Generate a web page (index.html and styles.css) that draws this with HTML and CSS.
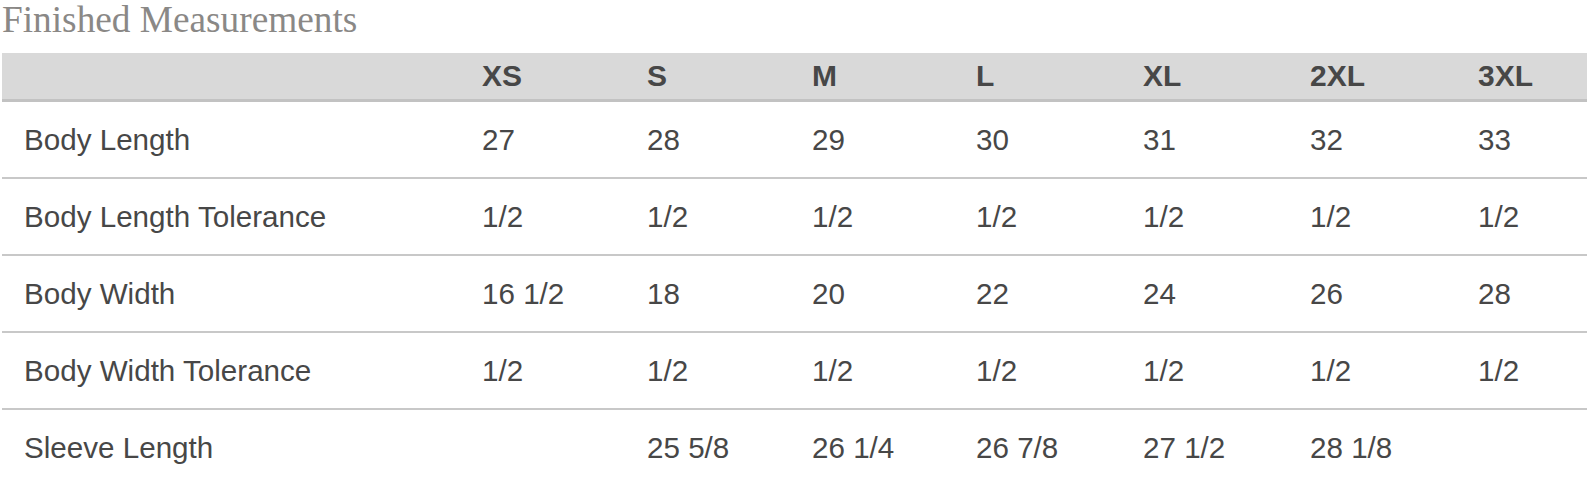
FILE: index.html
```html
<!DOCTYPE html>
<html>
<head>
<meta charset="utf-8">
<link rel="stylesheet" href="styles.css">
</head>
<body>
<div class="page">
  <h1 class="title">Finished Measurements</h1>
  <table class="sizes">
    <colgroup>
      <col class="c-label">
      <col class="c-xs"><col class="c-s"><col class="c-m"><col class="c-l"><col class="c-xl"><col class="c-2xl">
      <col class="c-last">
    </colgroup>
    <thead>
      <tr><th></th><th>XS</th><th>S</th><th>M</th><th>L</th><th>XL</th><th>2XL</th><th>3XL</th></tr>
    </thead>
    <tbody>
      <tr><td>Body Length</td><td>27</td><td>28</td><td>29</td><td>30</td><td>31</td><td>32</td><td>33</td></tr>
      <tr><td>Body Length Tolerance</td><td>1/2</td><td>1/2</td><td>1/2</td><td>1/2</td><td>1/2</td><td>1/2</td><td>1/2</td></tr>
      <tr><td>Body Width</td><td>16 1/2</td><td>18</td><td>20</td><td>22</td><td>24</td><td>26</td><td>28</td></tr>
      <tr><td>Body Width Tolerance</td><td>1/2</td><td>1/2</td><td>1/2</td><td>1/2</td><td>1/2</td><td>1/2</td><td>1/2</td></tr>
      <tr><td>Sleeve Length</td><td></td><td>25 5/8</td><td>26 1/4</td><td>26 7/8</td><td>27 1/2</td><td>28 1/8</td><td></td></tr>
    </tbody>
  </table>
</div>
</body>
</html>
```

FILE: styles.css
```css
html, body {
  margin: 0;
  padding: 0;
  background: #ffffff;
}

.page {
  width: 1585px;
  margin-left: 2px;
}

.title {
  margin: 0 0 13px 0;
  font-family: "Liberation Serif", "Times New Roman", serif;
  font-weight: normal;
  font-size: 37.3px;
  line-height: 40px;
  color: #8a8886;
}

.sizes {
  width: 1585px;
  border-collapse: collapse;
  table-layout: fixed;
  font-family: "Liberation Sans", Arial, sans-serif;
  color: #474747;
}

.c-label { width: 480px; }
.c-xs { width: 165px; }
.c-s { width: 165px; }
.c-m { width: 164px; }
.c-l { width: 167px; }
.c-xl { width: 167px; }
.c-2xl { width: 168px; }
.c-last { width: auto; }

.sizes th {
  background: #d9d9d9;
  border-bottom: 3px solid #c2c2c2;
  height: 46px;
  padding: 0;
  text-align: left;
  font-size: 30px;
  font-weight: bold;
  vertical-align: middle;
  color: #474747;
}

.sizes td {
  height: 75px;
  padding: 0;
  font-size: 29.6px;
  vertical-align: middle;
  border-bottom: 2px solid #c8c8c8;
}

.sizes tbody tr:last-child td {
  border-bottom: none;
}

.sizes td:first-child,
.sizes th:first-child {
  padding-left: 22px;
}
```
